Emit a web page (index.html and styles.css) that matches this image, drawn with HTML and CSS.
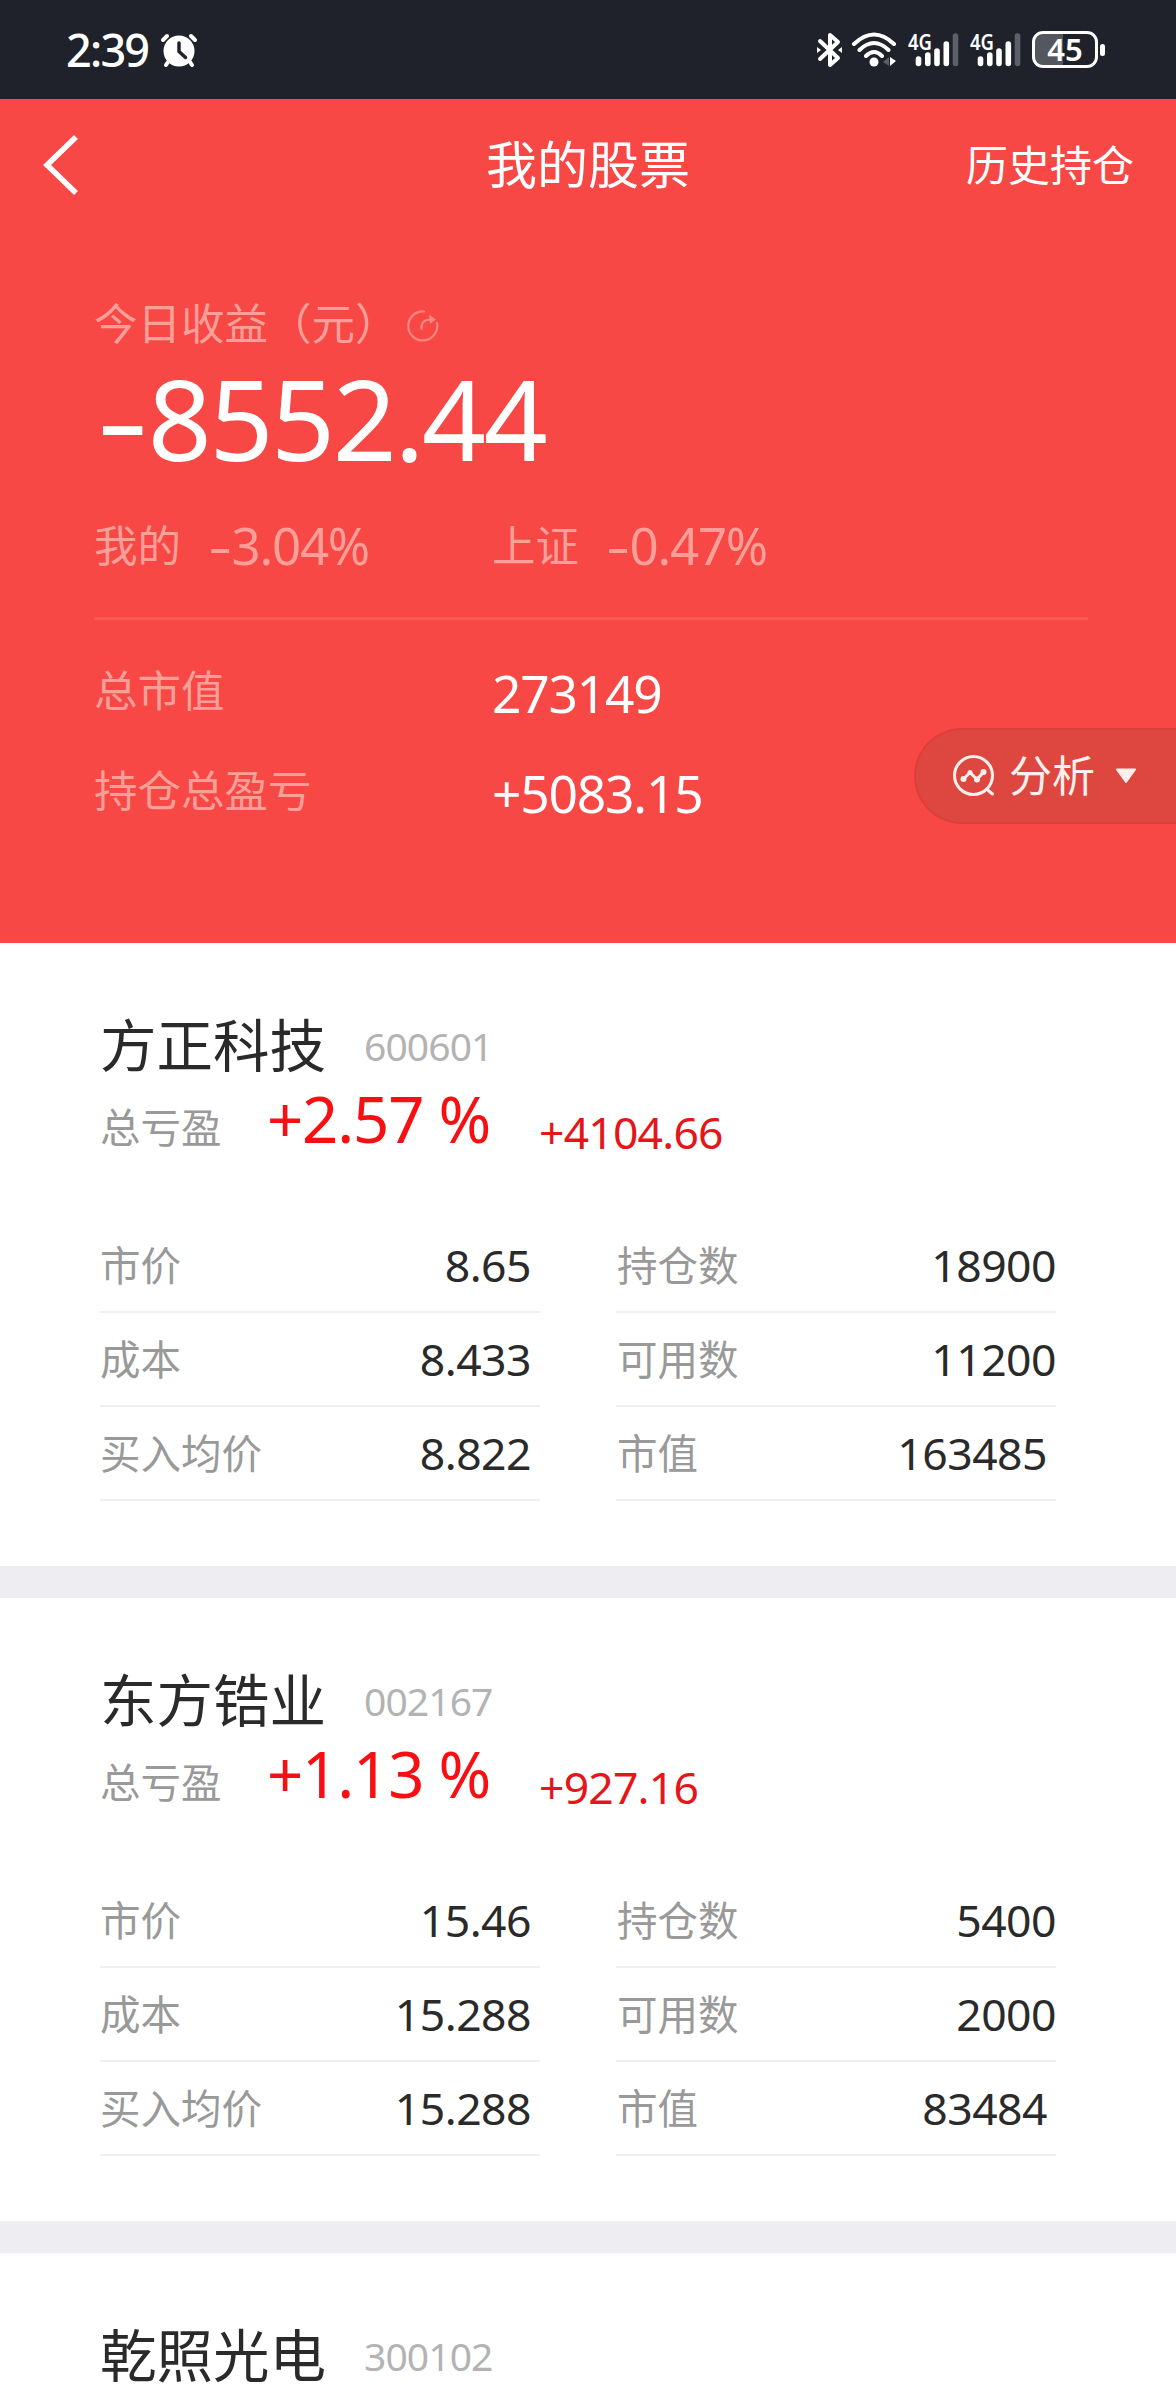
FILE: index.html
```html
<!DOCTYPE html>
<html lang="zh-CN">
    <head>
        <meta charset="UTF-8">
        <title>我的股票</title>
        <link rel="stylesheet" href="styles.css">
    </head>
    <body>
        <div class="statusBar">
            <span class="time">2:39</span>
            <svg class="alarm" width="38" height="36" viewBox="0 0 38 36">
                <g stroke="#fff" stroke-width="4" stroke-linecap="round">
                    <path d="M3 8L7 4M35 8L31 4M8 30L6 33M30 30L32 33"/>
                </g>
                <circle cx="19" cy="19" r="15.5" fill="#fff"/>
                <path d="M19 11V19.500L25.500 25.500" fill="none" stroke="#1f222b" stroke-width="3.500" stroke-linecap="round"/>
            </svg>
            <div class="statusIcons">
                <svg width="26" height="36" viewBox="0 0 26 36">
                    <path d="M3 9L21 26L13 33V3L21 10L3 27" fill="none" stroke="#fff" stroke-width="4" stroke-linejoin="round" stroke-linecap="round"/>
                    <path d="M0 15L4 18L0 21ZM25 15L21 18L25 21Z" fill="#fff"/>
                </svg>
                <svg class="wifi" width="46" height="36" viewBox="0 0 46 36">
                    <g fill="none" stroke="#fff" stroke-width="4" stroke-linecap="round">
                        <path d="M3 12Q23 -7 43 12M8.500 18Q23 4 37.500 18M15 24Q23 16 31 24"/>
                    </g>
                    <circle cx="23" cy="30" r="4.500" fill="#fff"/>
                    <path d="M32 30L38 25V34Z" fill="#5b5d65"/>
                    <path d="M39 25L45 29L39 34Z" fill="#fff"/>
                </svg>
                <svg class="signal" width="51" height="50" viewBox="0 -7 51 50">
                    <text x="0" y="17.500" class="netType" textLength="24" lengthAdjust="spacingAndGlyphs">4G</text>
                    <g stroke="#fff" stroke-width="5.600" stroke-linecap="round">
                        <path d="M10.500 27V31.500M19.800 23V31.500M29 19V31.500M38.300 12V31.500"/>
                        <path d="M47.500 4V31.500" stroke="#5d6068"/>
                    </g>
                </svg>
                <svg class="signal" width="51" height="50" viewBox="0 -7 51 50">
                    <text x="0" y="17.500" class="netType" textLength="24" lengthAdjust="spacingAndGlyphs">4G</text>
                    <g stroke="#fff" stroke-width="5.600" stroke-linecap="round">
                        <path d="M10.500 27V31.500M19.800 23V31.500M29 19V31.500M38.300 12V31.500"/>
                        <path d="M47.500 4V31.500" stroke="#5d6068"/>
                    </g>
                </svg>
                <div class="battery"><span>45</span></div>
                <div class="batteryTip"></div>
            </div>
        </div>

        <div class="top">
            <div class="nav">
                <svg class="back" width="36" height="64" viewBox="0 0 36 64">
                    <path d="M34 4L5 32L34 60" fill="none" stroke="#fff" stroke-width="5.500"/>
                </svg>
                <h1>我的股票</h1>
                <a class="history">历史持仓</a>
            </div>
            <div class="summary">
                <div class="label today">
                    今日收益（元）
                    <svg width="32" height="34" viewBox="0 0 32 34">
                        <g fill="none" stroke="#fb8580" stroke-width="2.200" stroke-linecap="round">
                            <path d="M17 2.500A14.500 14.500 0 1 0 30 14"/>
                            <path d="M14.500 20C14 14 17 10.500 24 10.500"/>
                        </g>
                        <path d="M22 5.500L29 10.500L23 15Z" fill="#fb8580"/>
                    </svg>
                </div>
                <div class="profit num"><span class="minus">-</span>8552.44</div>
                <div class="compare">
                    <div class="half"><span class="label">我的</span><span class="rate num"><span class="minus">-</span>3.04%</span></div>
                    <div class="half"><span class="label">上证</span><span class="rate num"><span class="minus">-</span>0.47%</span></div>
                </div>
                <div class="total"><span class="label">总市值</span><span class="num">273149</span></div>
                <div class="total"><span class="label">持仓总盈亏</span><span class="num">+5083.15</span></div>
            </div>
            <div class="analysis">
                <svg width="44" height="44" viewBox="0 0 44 44">
                    <g fill="none" stroke="#fff0ee" stroke-width="3" stroke-linecap="round" stroke-linejoin="round">
                        <circle cx="21.500" cy="21.500" r="19"/>
                        <path d="M34.500 35L40.500 40"/>
                        <path d="M11.500 25L18 18.500L25 25.500L31.500 18"/>
                    </g>
                    <g fill="#fff0ee">
                        <circle cx="11.500" cy="25" r="3"/><circle cx="18" cy="18.500" r="2.500"/>
                        <circle cx="25" cy="25.500" r="3"/><circle cx="31.500" cy="18" r="3"/>
                    </g>
                </svg>
                <span>分析</span>
                <svg class="arrow" width="22" height="16" viewBox="0 0 22 16">
                    <path d="M2 1.500H20L11 14Z" fill="#fff0ee" stroke="#fff0ee" stroke-width="2" stroke-linejoin="round"/>
                </svg>
            </div>
        </div>

        <div class="stock">
            <div class="name"><h2>方正科技</h2><span class="code num">600601</span></div>
            <div class="gain">
                <span class="gainLabel">总亏盈</span>
                <span class="percent num">+2.57 %</span>
                <span class="amount num">+4104.66</span>
            </div>
            <div class="details">
                <div class="row">市价<span class="num">8.65</span></div>
                <div class="row">持仓数<span class="num">18900</span></div>
                <div class="row">成本<span class="num">8.433</span></div>
                <div class="row">可用数<span class="num">11200</span></div>
                <div class="row">买入均价<span class="num">8.822</span></div>
                <div class="row worth">市值<span class="num">163485</span></div>
            </div>
        </div>

        <div class="stock">
            <div class="name"><h2>东方锆业</h2><span class="code num">002167</span></div>
            <div class="gain">
                <span class="gainLabel">总亏盈</span>
                <span class="percent num">+1.13 %</span>
                <span class="amount num">+927.16</span>
            </div>
            <div class="details">
                <div class="row">市价<span class="num">15.46</span></div>
                <div class="row">持仓数<span class="num">5400</span></div>
                <div class="row">成本<span class="num">15.288</span></div>
                <div class="row">可用数<span class="num">2000</span></div>
                <div class="row">买入均价<span class="num">15.288</span></div>
                <div class="row worth">市值<span class="num">83484</span></div>
            </div>
        </div>

        <div class="stock last">
            <div class="name"><h2>乾照光电</h2><span class="code num">300102</span></div>
        </div>
    </body>
</html>
```
FILE: styles.css
```css
*{
    box-sizing: border-box;
}
body{
    margin: 0;
    width: 1176px;
    height: 2400px;
    background-color: #fff;
    color: #2a2a2a;
    font-family: "Noto Sans CJK SC", sans-serif;
    white-space: nowrap;
}
h1,h2{
    margin: 0;
    font-weight: 400;
}
svg{
    display: block;
    flex: none;
}
.num{
    font-family: "Noto Sans", sans-serif;
}

/* status bar */
.statusBar{
    display: flex;
    align-items: center;
    height: 99px;
    padding: 0 71px 0 66px;
    background-color: #1f222b;
    color: #fff;
}
.time{
    width: 94px;
    font: 500 45px "Noto Sans", sans-serif;
    letter-spacing: -1.8px;
}
.statusIcons{
    display: flex;
    align-items: center;
    margin-left: auto;
}
.wifi{
    margin-left: 8px;
}
.signal{
    margin-left: 11px;
}
.netType{
    font: 600 22px "Noto Sans", sans-serif;
    fill: #fff;
}
.battery{
    display: flex;
    align-items: center;
    justify-content: center;
    width: 66px;
    height: 37px;
    margin-left: 11px;
    border: 3px solid #fff;
    border-radius: 11px;
    background: linear-gradient(to right, #55575f 46%, transparent 46%);
    font: 600 31px/31px "Noto Sans", sans-serif;
}
.batteryTip{
    width: 5px;
    height: 12px;
    margin-left: 2px;
    border-radius: 3px;
    background-color: #fff;
}

/* red header */
.top{
    position: relative;
    height: 844px;
    background-color: #f74845;
    color: #fff;
}
.nav{
    display: grid;
    grid-template-columns: 1fr auto 1fr;
    align-items: center;
    height: 132px;
    padding: 0 42px;
}
.nav h1{
    font-size: 51px;
    line-height: 60px;
    margin-top: -6px;
}
.history{
    justify-self: end;
    font-size: 42px;
    line-height: 60px;
    margin-top: -5px;
}
.summary{
    padding: 61px 88px 0 94px;
}
.label{
    font-size: 43.500px;
    line-height: 60px;
    color: #fc9f98;
}
.today{
    display: flex;
    align-items: center;
}
.today svg{
    margin: 8px 0 0 8px;
}
.profit{
    margin-top: 6px;
    font-size: 112px;
    line-height: 120px;
    letter-spacing: -2.4px;
}
.minus{
    display: inline-block;
    width: .48em;
    text-align: center;
    transform: scaleX(1.45);
}
.compare{
    display: flex;
    height: 142px;
    padding-top: 36px;
    border-bottom: 3px solid #fa5853;
}
.half{
    display: flex;
    width: 398px;
}
.rate{
    margin-left: 26px;
    font-size: 51px;
    line-height: 62px;
    letter-spacing: -1.2px;
    color: #fc9f98;
}
.total{
    display: flex;
    align-items: center;
    height: 100px;
}
.compare + .total{
    margin-top: 23px;
}
.total .label{
    width: 398px;
    margin-top: -8px;
}
.total .num{
    font-size: 51.500px;
    letter-spacing: -1.2px;
}
.analysis{
    position: absolute;
    right: 0;
    top: 629px;
    display: flex;
    align-items: center;
    width: 262px;
    height: 96px;
    padding-left: 36px;
    border: 2px solid #dc3f3b;
    border-right: none;
    border-radius: 48px 0 0 48px;
    background-color: #de473f;
    color: #fff0ee;
    font-size: 43px;
    line-height: 60px;
}
.analysis span{
    margin: -7px 0 0 13px;
}
.arrow{
    margin-left: 20px;
}

/* stock list */
.stock{
    height: 655px;
    padding: 69px 120px 0 100px;
    border-bottom: 32px solid #eeedf2;
}
.last{
    height: 147px;
    border: none;
}
.name{
    display: flex;
    align-items: center;
    height: 66px;
}
.name h2{
    font-size: 56.500px;
    line-height: 66px;
    margin-top: -7px;
}
.code{
    margin-left: 38px;
    font-size: 39px;
    letter-spacing: -.9px;
    color: #b3b3b3;
}
.gain{
    display: flex;
    align-items: baseline;
    height: 144px;
}
.gainLabel{
    width: 167px;
    font-size: 40.500px;
    color: #999;
}
.percent{
    width: 272px;
    font-size: 63.500px;
    line-height: 82px;
    letter-spacing: -1.2px;
    color: #f80f12;
}
.amount{
    padding-top: 6px;
    font-size: 44.500px;
    letter-spacing: -.8px;
    color: #e61519;
    transform: translateY(6px);
}
.details{
    display: grid;
    grid-template-columns: 440px 440px;
    column-gap: 76px;
    margin-top: -3px;
}
.row{
    display: flex;
    justify-content: space-between;
    align-items: center;
    height: 94px;
    padding: 0 9px 3px 0;
    border-bottom: 2px solid #efefef;
    font-size: 40.500px;
    line-height: 60px;
    color: #999;
}
.row:nth-child(even){
    padding: 0 0 3px 1px;
}
.row.worth{
    padding-right: 9px;
}
.row .num{
    margin-top: 3px;
    font-size: 44.500px;
    letter-spacing: -.5px;
    color: #2a2a2a;
}
```
